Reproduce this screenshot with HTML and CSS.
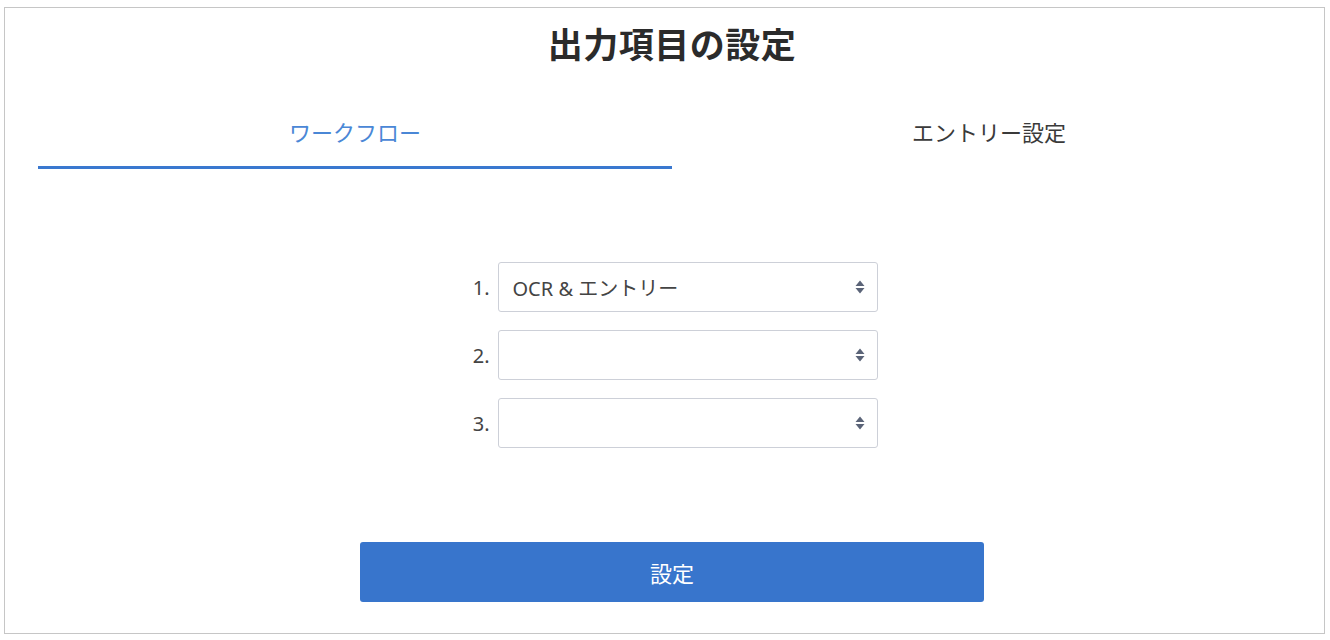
FILE: index.html
```html
<!DOCTYPE html>
<html lang="ja">
<head>
<meta charset="utf-8">
<title>出力項目の設定</title>
<link rel="stylesheet" href="styles.css">
</head>
<body>
<div class="card">
  <h1 class="title">出力項目の設定</h1>
  <div class="tabs">
    <div class="tab active">ワークフロー</div>
    <div class="tab">エントリー設定</div>
  </div>
  <div class="form">
    <div class="row">
      <span class="num">1.</span>
      <div class="select">
        <span class="value">OCR &amp; エントリー</span>
        <svg class="caret" width="10" height="16" viewBox="0 0 10 16"><path d="M0.5 7 L5 1.5 L9.5 7 Z M0.5 9 L9.5 9 L5 14.5 Z" fill="#5b6478"/></svg>
      </div>
    </div>
    <div class="row">
      <span class="num">2.</span>
      <div class="select">
        <span class="value"></span>
        <svg class="caret" width="10" height="16" viewBox="0 0 10 16"><path d="M0.5 7 L5 1.5 L9.5 7 Z M0.5 9 L9.5 9 L5 14.5 Z" fill="#5b6478"/></svg>
      </div>
    </div>
    <div class="row">
      <span class="num">3.</span>
      <div class="select">
        <span class="value"></span>
        <svg class="caret" width="10" height="16" viewBox="0 0 10 16"><path d="M0.5 7 L5 1.5 L9.5 7 Z M0.5 9 L9.5 9 L5 14.5 Z" fill="#5b6478"/></svg>
      </div>
    </div>
  </div>
  <div class="actions">
    <button class="submit" type="button">設定</button>
  </div>
</div>
</body>
</html>
```
FILE: styles.css
```css
* { box-sizing: border-box; }
html, body { margin: 0; padding: 0; background: #ffffff; }
body {
  font-family: "Noto Sans", "Noto Sans CJK JP", sans-serif;
  color: #333333;
}
.card {
  margin: 7px 5px 0 4px;
  height: 627px;
  border: 1px solid #c6c6c6;
  background: #fff;
  padding: 12px 18px 30px 33px;
  display: flex;
  flex-direction: column;
}
.title {
  margin: 0;
  height: 50px;
  line-height: 50px;
  text-align: center;
  font-size: 35px;
  font-weight: 700;
  color: #2b2b2b;
  letter-spacing: 0.5px;
  flex: none;
}
.tabs {
  margin-top: 26px;
  display: flex;
  flex: none;
}
.tab {
  flex: 1 1 0;
  text-align: center;
  font-size: 22px;
  line-height: 32px;
  padding: 20px 0 18px;
  color: #3a3a3a;
  border-bottom: 3px solid transparent;
}
.tab.active {
  color: #4a87d6;
  border-bottom-color: #3a78cf;
}
.form {
  margin-top: 93px;
  display: flex;
  flex-direction: column;
  align-items: center;
  gap: 18px;
  flex: none;
}
.row {
  display: flex;
  align-items: center;
  gap: 8px;
  margin-left: 2px;
}
.num {
  width: 21px;
  text-align: right;
  font-size: 20px;
  color: #444;
}
.select {
  width: 380px;
  height: 50px;
  border: 1px solid #cdd0d8;
  border-radius: 3px;
  display: flex;
  align-items: center;
  justify-content: space-between;
  padding: 0 12px 0 14px;
  font-size: 20px;
  color: #444;
}
.caret { display: block; }
.actions {
  margin-top: 94px;
  display: flex;
  justify-content: center;
  flex: none;
}
.submit {
  width: 624px;
  height: 60px;
  border: none;
  border-radius: 3px;
  background: #3875cc;
  color: #ffffff;
  font-family: "Noto Sans CJK JP", sans-serif;
  font-size: 22px;
}
```
